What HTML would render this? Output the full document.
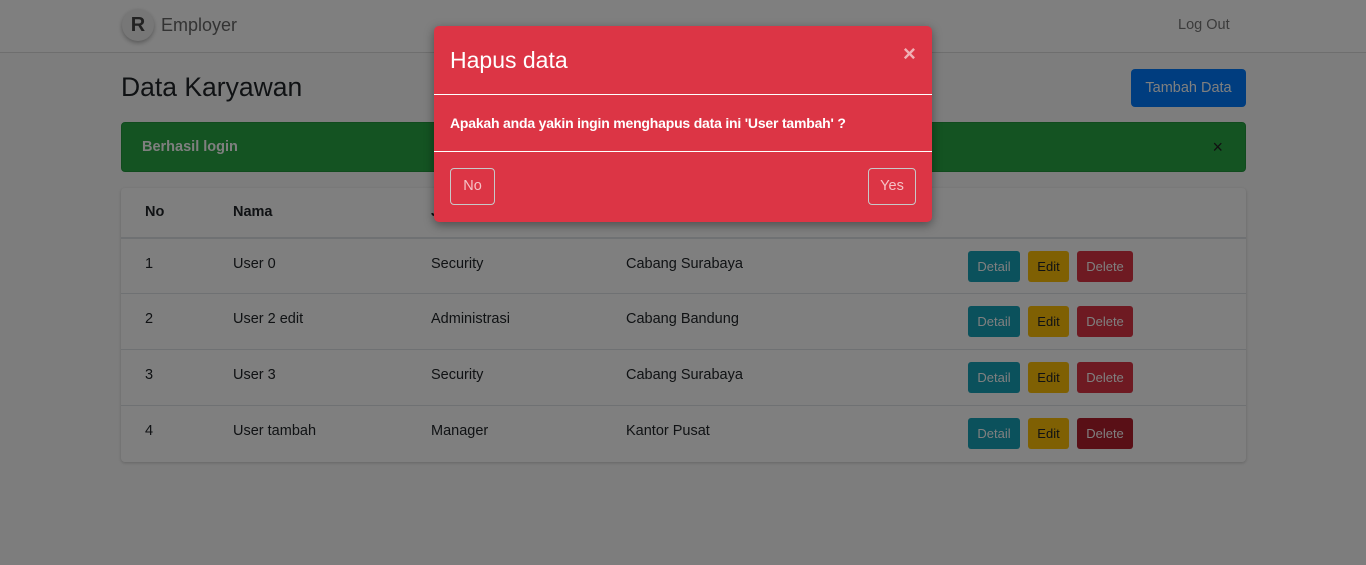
<!DOCTYPE html>
<html><head><meta charset="utf-8"><style>
*{box-sizing:border-box;margin:0;padding:0}
body{width:1366px;height:565px;overflow:hidden;background:#fbfbfb;font-family:"Liberation Sans",sans-serif;color:#212529;position:relative;font-size:14px}
.nav{height:53px;background:#fff;border-bottom:1px solid #ddd;position:relative}
.logo{position:absolute;left:122px;top:9px;width:32px;height:32px;border-radius:50%;background:#eee;box-shadow:0 2px 5px rgba(0,0,0,.3);font-weight:bold;font-size:20px;color:#444;text-align:center;line-height:32px}
.brand{position:absolute;left:161px;top:15px;font-size:18px;color:#666}
.logout{position:absolute;left:1178px;top:17px;font-size:14.5px;color:#777}
h1{position:absolute;left:121px;top:72px;font-size:26.5px;font-weight:normal}
.add{position:absolute;left:1131px;top:69px;width:115px;height:38px;background:#007bff;color:#fff;border-radius:4px;font-size:14.5px;text-align:center;line-height:38px}
.alert{position:absolute;left:121px;top:122px;width:1125px;height:50px;background:#28a745;border:1px solid #23963d;border-radius:4px;color:#fff;font-weight:bold;font-size:14.5px;padding:16px 20px}
.alert span{position:absolute;right:22px;top:14px;font-weight:normal;font-size:18px;color:#222}
.card{position:absolute;left:121px;top:188px;width:1125px;height:274px;background:#fff;border-radius:4px;box-shadow:0 1px 3px rgba(0,0,0,.2)}
.row{position:absolute;left:0;width:1125px;height:56px;border-top:1px solid #dee2e6;font-size:14.5px}
.row div{position:absolute;top:17px}
.hd{height:49px;border:none;font-weight:bold}
.hd div{top:16px}
.b{position:absolute;top:12px!important;height:31px;border-radius:3px;font-size:13px;text-align:center;line-height:31px;color:#fff}
.ov{position:absolute;inset:0;background:rgba(0,0,0,.5)}
.modal{position:absolute;left:434px;top:26px;width:498px;height:196px;background:#dc3545;border-radius:5px;color:#fff;box-shadow:0 3px 10px rgba(0,0,0,.4)}
.mt{position:absolute;left:16px;top:21px;font-size:23px}
.x{position:absolute;left:469px;top:15px;font-size:22px;font-weight:bold;color:#f0b0b5}
.l{position:absolute;left:0;width:498px;height:1px;background:#fff}
.mb{position:absolute;left:16px;top:89px;font-size:14px;font-weight:bold;letter-spacing:-0.2px}
.mbtn{position:absolute;top:142px;height:37px;border:1px solid #c8c8c8;border-radius:4px;color:#f5c2c6;font-size:14.5px;text-align:center;line-height:35px}
</style></head><body>
<div class="nav"><div class="logo">R</div><div class="brand">Employer</div><div class="logout">Log Out</div></div>
<h1>Data Karyawan</h1>
<div class="add">Tambah Data</div>
<div class="alert">Berhasil login<span>×</span></div>
<div class="card">
<div class="row hd" style="top:0"><div style="left:24px">No</div><div style="left:112px">Nama</div><div style="left:310px">Jabatan</div><div style="left:505px">Cabang</div></div>
<div class="row" style="top:49px;border-top:2px solid #dee2e6"><div style="left:24px">1</div><div style="left:112px">User 0</div><div style="left:310px">Security</div><div style="left:505px">Cabang Surabaya</div><div class="b" style="left:847px;width:52px;background:#17a2b8">Detail</div><div class="b" style="left:907px;width:41px;background:#ffc107;color:#212529">Edit</div><div class="b" style="left:956px;width:56px;background:#dc3545">Delete</div></div>
<div class="row" style="top:105px"><div style="left:24px">2</div><div style="left:112px">User 2 edit</div><div style="left:310px">Administrasi</div><div style="left:505px">Cabang Bandung</div><div class="b" style="left:847px;width:52px;background:#17a2b8">Detail</div><div class="b" style="left:907px;width:41px;background:#ffc107;color:#212529">Edit</div><div class="b" style="left:956px;width:56px;background:#dc3545">Delete</div></div>
<div class="row" style="top:161px"><div style="left:24px">3</div><div style="left:112px">User 3</div><div style="left:310px">Security</div><div style="left:505px">Cabang Surabaya</div><div class="b" style="left:847px;width:52px;background:#17a2b8">Detail</div><div class="b" style="left:907px;width:41px;background:#ffc107;color:#212529">Edit</div><div class="b" style="left:956px;width:56px;background:#dc3545">Delete</div></div>
<div class="row" style="top:217px"><div style="left:24px">4</div><div style="left:112px">User tambah</div><div style="left:310px">Manager</div><div style="left:505px">Kantor Pusat</div><div class="b" style="left:847px;width:52px;background:#17a2b8">Detail</div><div class="b" style="left:907px;width:41px;background:#ffc107;color:#212529">Edit</div><div class="b" style="left:956px;width:56px;background:#b21f2d">Delete</div></div>
</div>
<div class="ov"></div>
<div class="modal">
<div class="mt">Hapus data</div><div class="x">×</div>
<div class="l" style="top:68px"></div>
<div class="mb">Apakah anda yakin ingin menghapus data ini 'User tambah' ?</div>
<div class="l" style="top:125px"></div>
<div class="mbtn" style="left:16px;width:45px">No</div>
<div class="mbtn" style="left:434px;width:48px">Yes</div>
</div>
</body></html>
